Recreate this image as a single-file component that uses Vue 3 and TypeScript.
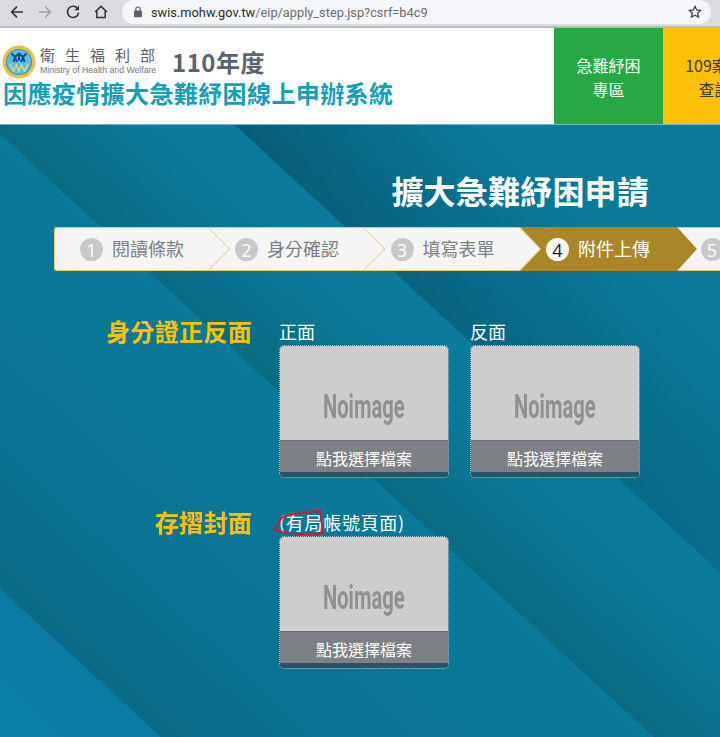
<script setup lang="ts">
const steps = [
  { n: 1, label: '閱讀條款', active: false },
  { n: 2, label: '身分確認', active: false },
  { n: 3, label: '填寫表單', active: false },
  { n: 4, label: '附件上傳', active: true },
  { n: 5, label: '', active: false },
]
</script>

<template>
  <div class="page">
    <div class="chrome">
      <svg class="nav" width="16" height="16" viewBox="0 0 16 16"><path d="M14 8H3M8 2.600 2.600 8 8 13.400" fill="none" stroke="#333" stroke-width="1.600"/></svg>
      <svg class="nav" width="16" height="16" viewBox="0 0 16 16"><path d="M2 8h11M8 2.600 13.400 8 8 13.400" fill="none" stroke="#a0a2a6" stroke-width="1.400"/></svg>
      <svg class="nav" width="16" height="16" viewBox="0 0 16 16"><path d="M13 5.200A5.600 5.600 0 1 0 13.600 8.600" fill="none" stroke="#333" stroke-width="1.600"/><path d="M14 1.600v4.600H9.400z" fill="#333"/></svg>
      <svg class="nav" width="16" height="16" viewBox="0 0 16 16"><path d="M2 8 8 2.400 14 8M3.800 7v6.600h8.400V7" fill="none" stroke="#333" stroke-width="1.500"/></svg>
      <div class="url">
        <svg width="10" height="12" viewBox="0 0 10 12"><rect x="1" y="4.600" width="8" height="6.600" rx="1" fill="#5f6368"/><path d="M2.800 5V3.200a2.200 2.200 0 0 1 4.400 0V5" fill="none" stroke="#5f6368" stroke-width="1.200"/></svg>
        <span class="addr"><b>swis.mohw.gov.tw</b>/eip/apply_step.jsp?csrf=b4c9</span>
        <svg class="star" width="14" height="14" viewBox="0 0 14 14"><path d="M7 1.400 8.700 5l3.900.500-2.900 2.700.800 3.900L7 10.200l-3.500 1.900.800-3.900L1.400 5.500 5.300 5z" fill="none" stroke="#444" stroke-width="1.300"/></svg>
      </div>
    </div>

    <header class="head">
      <div class="brand">
        <div class="brand-top">
          <svg class="seal" width="34" height="34" viewBox="0 0 34 34">
            <circle cx="17" cy="17" r="16.500" fill="#e9c046"/>
            <circle cx="17" cy="17" r="13" fill="#3c7fa8"/>
            <circle cx="17" cy="17" r="12.200" fill="#58bfe6"/>
            <path d="M9.500 8.500l3.500 3.500 4-3.500 4 3.500 3.500-3.500M13 12l-1.500 5M13 12l2 5M21 12l-2 5M21 12l1.500 5M17 8.500v7" fill="none" stroke="#1b3f8f" stroke-width="1.900"/>
            <path d="M8 19l3.500 7 3-6 2.500 6 2.500-6 3 6 3.500-7" fill="none" stroke="#f0d565" stroke-width="1.400"/>
          </svg>
          <div class="ministry">
            <div class="min-zh">衛生福利部</div>
            <div class="min-en">Ministry of Health and Welfare</div>
          </div>
          <div class="year">110年度</div>
        </div>
        <div class="title">因應疫情擴大急難紓困線上申辦系統</div>
      </div>
      <div class="links">
        <div class="link green">急難紓困<br>專區</div>
        <div class="link yellow">109案件<br>查詢</div>
      </div>
    </header>

    <main class="main">
      <h1 class="page-title">擴大急難紓困申請</h1>

      <div class="steps">
        <div v-for="s in steps" :key="s.n" class="step" :class="{ active: s.active }">
          <span class="num">{{ s.n }}</span>
          <span v-if="s.label" class="label">{{ s.label }}</span>
        </div>
      </div>

      <section class="row row-id">
        <div class="row-label">身分證正反面</div>
        <div class="uploads">
          <div class="upload">
            <div class="cap">正面</div>
            <div class="box">
              <div class="noimage"><span>Noimage</span></div>
              <div class="pick">點我選擇檔案</div>
            </div>
          </div>
          <div class="upload">
            <div class="cap">反面</div>
            <div class="box">
              <div class="noimage"><span>Noimage</span></div>
              <div class="pick">點我選擇檔案</div>
            </div>
          </div>
        </div>
      </section>

      <section class="row row-book">
        <div class="row-label">存摺封面</div>
        <div class="uploads">
          <div class="upload">
            <div class="cap cap-book">
              (有局帳號頁面)
              <svg class="scribble" width="52" height="27" viewBox="0 0 52 27"><path d="M1 21C4 15 6 10 9 8c4-2 10-3 17-4 7-1 14-2 20-2 1 7 2 15 3 22-8 1-15 1-23 1-6 0-14-1-25-4z" fill="none" stroke="#e8131f" stroke-width="1.800"/></svg>
            </div>
            <div class="box">
              <div class="noimage"><span>Noimage</span></div>
              <div class="pick">點我選擇檔案</div>
            </div>
          </div>
        </div>
      </section>
    </main>
  </div>
</template>

<style>
html, body { margin: 0; background: #0a7b9b; overflow: hidden; }
</style>

<style scoped>
.page {
  width: 720px;
  height: 737px;
  overflow: hidden;
  font-family: "Noto Sans CJK TC", "Noto Sans", sans-serif;
  display: flex;
  flex-direction: column;
}
.chrome {
  height: 28px;
  box-sizing: border-box;
  background: #dadce0;
  border-bottom: 2px solid #b9babd;
  display: flex;
  align-items: flex-start;
  padding: 4px 0 0 9px;
  gap: 12px;
  flex: none;
}
.nav { flex: none; }
.url {
  margin: -4px 0 0 1px;
  width: 589px;
  height: 24px;
  flex: none;
  background: #f4f6f9;
  border-radius: 12px;
  display: flex;
  align-items: center;
  padding: 0 8px 0 11px;
  box-sizing: border-box;
  gap: 8px;
}
.addr {
  font-family: Roboto, "Liberation Sans", sans-serif;
  font-size: 12.800px;
  color: #6b6e72;
  white-space: nowrap;
}
.addr b { font-weight: 400; color: #2a2c2f; }
.star { margin-left: auto; margin-right: 1px; }
.head {
  height: 97px;
  flex: none;
  box-sizing: border-box;
  background: #fff;
  border-bottom: 1px solid #6fb3bd;
  display: flex;
}
.brand { width: 554px; flex: none; padding: 15px 0 0 2px; box-sizing: border-box; }
.brand-top { display: flex; align-items: center; height: 37px; }
.seal { flex: none; }
.ministry { margin-left: 4px; width: 118px; flex: none; }
.min-zh {
  font-size: 15px;
  line-height: 18px;
  color: #5c6066;
  letter-spacing: 10px;
  white-space: nowrap;
}
.min-en {
  font-family: "Liberation Sans", sans-serif;
  font-size: 8.700px;
  line-height: 13px;
  color: #70757a;
  white-space: nowrap;
}
.year {
  font-size: 24px;
  line-height: 30px;
  font-weight: 700;
  color: #5a6470;
  margin-left: 14px;
  letter-spacing: .5px;
  white-space: nowrap;
}
.title {
  font-size: 24px;
  line-height: 30px;
  font-weight: 700;
  color: #16a0b5;
  letter-spacing: .400px;
  white-space: nowrap;
  margin-top: -2px;
  margin-left: 1px;
}
.links { display: flex; flex: none; }
.link {
  width: 109px;
  flex: none;
  box-sizing: border-box;
  font-size: 16px;
  line-height: 24px;
  text-align: center;
  padding-top: 25px;
  white-space: nowrap;
}
.green { background: #28a745; color: #fff; }
.yellow { background: #ffc107; color: #3c3a20; padding-right: 6px; }
.main {
  position: relative;
  flex: 1;
  overflow: hidden;
  background: linear-gradient(
    42.700deg,
    #0a80a8 0,
    #0a7ca3 109px,
    #0a6a85 109px,
    #0a7293 220px,
    #0a7a9a 443px,
    #0a6a82 443px,
    #0a7b9c 560px,
    #0a7a9b 770px,
    #0a7b9b 938px
  );
}
.main::before {
  content: "";
  position: absolute;
  inset: 0;
  background: linear-gradient(
    42.700deg,
    rgba(5, 50, 65, 0) 609px,
    rgba(5, 50, 65, .4) 609px,
    rgba(5, 50, 65, 0) 770px
  );
  -webkit-mask-image: linear-gradient(to bottom, #000 0, rgba(0, 0, 0, .5) 450px);
  mask-image: linear-gradient(to bottom, #000 0, rgba(0, 0, 0, .5) 450px);
}
.page-title {
  position: relative;
  margin: 0;
  padding: 44px 71px 0 0;
  text-align: right;
  font-size: 32px;
  line-height: 42px;
  font-weight: 700;
  color: #fff;
  letter-spacing: .2px;
}
.steps {
  position: relative;
  display: flex;
  margin: 16px 0 0 54px;
  height: 44px;
  width: 700px;
  box-sizing: border-box;
  white-space: nowrap;
  background: #f5f5f5;
  border: 1px solid #e8c96a;
  border-right: 0;
  border-radius: 3px 0 0 3px;
}
.step {
  position: relative;
  flex: none;
  width: 155.500px;
  box-sizing: border-box;
  height: 42px;
  display: flex;
  align-items: center;
  padding: 1px 0 0 26px;
  gap: 9px;
  color: #7b8085;
  font-size: 18px;
}
.step::after {
  content: "";
  position: absolute;
  right: -15.200px;
  top: 5.800px;
  width: 30.400px;
  height: 30.400px;
  box-sizing: border-box;
  border-top: 1px solid #ecd38a;
  border-right: 1px solid #ecd38a;
  transform: rotate(45deg);
}
.step:first-child { padding-left: 25px; width: 154px; }
.step:last-child { padding-left: 25px; }
.step:last-child::after { display: none; }
.step.active { color: #fff; }
.step.active::before {
  content: "";
  position: absolute;
  z-index: 1;
  left: 0;
  top: -1px;
  width: 177px;
  height: 44px;
  background: #aa8628;
  clip-path: polygon(0 0, 157px 0, 177px 50%, 157px 100%, 0 100%, 21px 50%);
}
.step.active::after { display: none; }
.step.active .num, .step.active .label { position: relative; z-index: 2; }
.num {
  width: 23px;
  height: 23px;
  flex: none;
  border-radius: 50%;
  background: #c8c8c8;
  color: #fff;
  font-family: "Open Sans", sans-serif;
  font-size: 18px;
  display: flex;
  align-items: center;
  justify-content: center;
}
.label { margin-bottom: 4px; }
.step.active .num { background: #fff; color: #222; }
.row { position: relative; display: flex; }
.row-label {
  width: 252px;
  flex: none;
  text-align: right;
  color: #ffc107;
  font-size: 24px;
  font-weight: 700;
  line-height: 28px;
  white-space: nowrap;
  letter-spacing: .3px;
}
.row-id { margin-top: 46px; }
.row-book { margin-top: 30px; }
.uploads { display: flex; gap: 21px; margin: 3px 0 0 27px; }
.upload { width: 170px; }
.cap {
  position: relative;
  color: #fff;
  font-size: 18px;
  line-height: 22px;
  height: 25px;
  white-space: nowrap;
}
.cap-book { letter-spacing: .7px; }
.scribble { position: absolute; left: -5px; top: -2px; }
.box {
  box-sizing: border-box;
  width: 170px;
  height: 133px;
  border: 1px dotted #a9d0da;
  border-radius: 5px;
  overflow: hidden;
  background: #24566a;
  display: flex;
  flex-direction: column;
}
.noimage {
  height: 94px;
  flex: none;
  box-sizing: border-box;
  background: #cdcdcd;
  color: #909090;
  display: flex;
  align-items: center;
  justify-content: center;
  padding-top: 27px;
  font-family: Roboto, "Liberation Sans", sans-serif;
  font-size: 33px;
  font-weight: 700;
}
.noimage span { display: inline-block; transform: scaleX(.61); white-space: nowrap; }
.pick {
  height: 32px;
  flex: none;
  background: #7d8084;
  border-top: 1px solid #6e7073;
  box-sizing: border-box;
  color: #fff;
  font-size: 16px;
  text-align: center;
  line-height: 34px;
}
</style>
